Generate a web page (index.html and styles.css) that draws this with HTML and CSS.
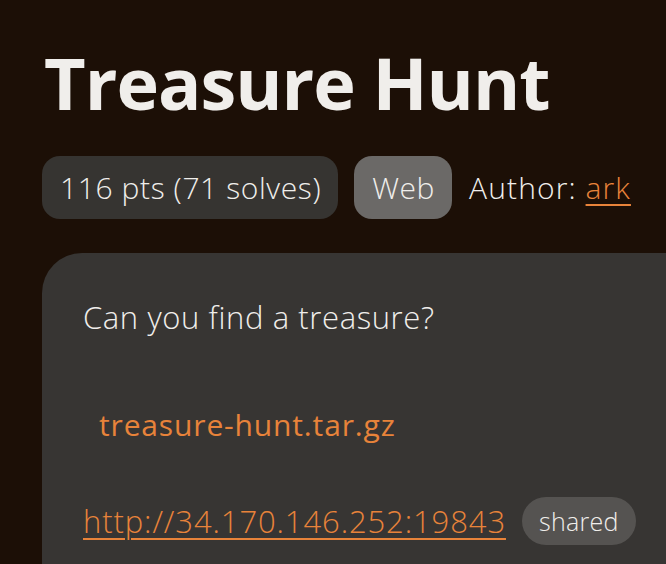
FILE: index.html
```html
<!DOCTYPE html>
<html>
<head>
<meta charset="utf-8">
<link rel="stylesheet" href="styles.css">
</head>
<body>
<main class="page">
  <h1 class="title">Treasure Hunt</h1>
  <div class="meta">
    <span class="pill pill-dark">116 pts (71 solves)</span>
    <span class="pill pill-light">Web</span>
    <span class="author">Author: <a class="link" href="#">ark</a></span>
  </div>
  <section class="card">
    <p class="desc">Can you find a treasure?</p>
    <div class="files"><a class="file" href="#">treasure-hunt.tar.gz</a></div>
    <div class="instance">
      <a class="link url" href="#">http://34.170.146.252:19843</a>
      <span class="tag">shared</span>
    </div>
  </section>
</main>
</body>
</html>
```
FILE: styles.css
```css
html, body {
  margin: 0;
  padding: 0;
  background: #1c0f06;
  height: 100%;
  overflow: hidden;
}
.page {
  padding: 38px 0 0 42px;
  font-family: "Open Sans", "Noto Sans", sans-serif;
  color: #f0eeeb;
}
.title {
  margin: 0 0 0 2px;
  font-size: 72px;
  font-weight: 700;
  line-height: 88px;
  letter-spacing: -1px;
  color: #f0eeeb;
}
.meta {
  display: flex;
  align-items: center;
  gap: 16px;
  margin-top: 30px;
  font-size: 30px;
  font-weight: 300;
  letter-spacing: 0.6px;
}
.pill {
  display: inline-flex;
  align-items: center;
  height: 63px;
  padding: 0 17px 0 18px;
  border-radius: 18px;
  box-sizing: border-box;
}
.pill-dark { background: #363431; }
.pill-light { background: #6b6967; }
.author { margin-left: 1px; letter-spacing: 1.1px; }
.link {
  color: #e8833a;
  text-decoration: underline;
  text-decoration-thickness: 2px;
  text-underline-offset: 5px;
}
.card {
  margin-top: 34px;
  background: #373533;
  border-top-left-radius: 40px;
  padding: 44px 0 40px 41px;
  min-height: 400px;
}
.desc {
  margin: 0;
  font-size: 31px;
  font-weight: 300;
  line-height: 40px;
  letter-spacing: 0.6px;
}
.files {
  margin-top: 68px;
  padding-left: 16px;
  line-height: 40px;
}
.file {
  color: #e8833a;
  text-decoration: none;
  font-size: 30px;
  font-weight: 400;
  letter-spacing: 0.85px;
}
.instance {
  display: flex;
  align-items: center;
  gap: 16px;
  margin-top: 47px;
  font-size: 31px;
  font-weight: 300;
  letter-spacing: 0.9px;
}
.tag {
  display: inline-flex;
  align-items: center;
  height: 48px;
  padding: 0 17px;
  border-radius: 24px;
  background: #555351;
  font-size: 25px;
  letter-spacing: 0.3px;
  color: #f0eeeb;
  box-sizing: border-box;
}
```
